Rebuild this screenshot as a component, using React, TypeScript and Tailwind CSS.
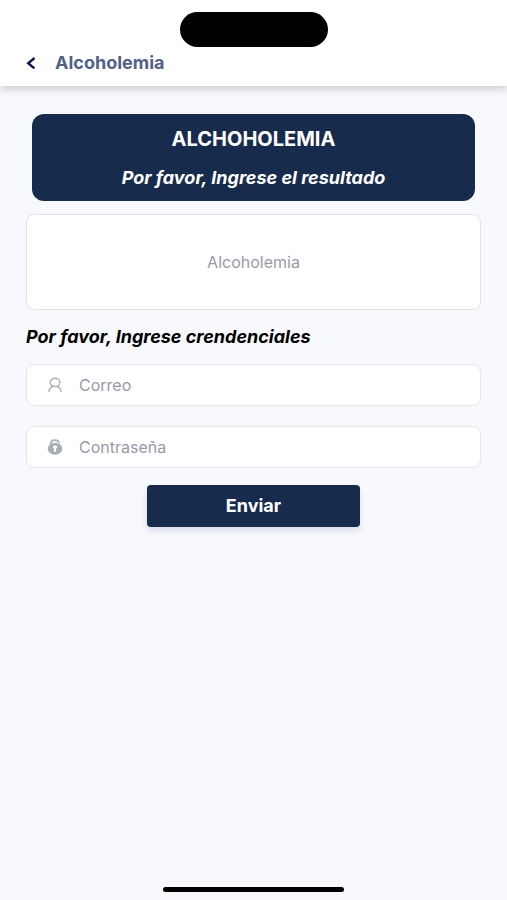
import type { ReactNode } from 'react';

interface CredentialFieldProps {
    id: string;
    label: string;
    type: 'email' | 'password';
    icon: ReactNode;
}

const UserIcon = () => (
    <svg viewBox="0 0 16 16" className="h-4 w-4" fill="none" stroke="currentColor" strokeWidth="1.4" strokeLinecap="round" aria-hidden="true">
        <ellipse cx="8" cy="5.4" rx="4.8" ry="4.1" />
        <path d="M2 14.3C2.3 11.7 3.9 10.1 6.2 9.4M14 14.3C13.7 11.7 12.1 10.1 9.8 9.4" />
    </svg>
);

const LockIcon = () => (
    <svg viewBox="0 0 16 16" className="h-4 w-4" fill="none" aria-hidden="true">
        <path d="M4 6V4.2C4 2.3 5.7 1.1 8 1.1C9.9 1.1 11.3 1.8 11.8 3.3" stroke="currentColor" strokeWidth="1.8" strokeLinecap="round" />
        <ellipse cx="8" cy="9.8" rx="7.3" ry="6" fill="currentColor" />
        <path d="M8 6.5C6.7 6.5 5.8 7.3 5.8 8.2C5.8 8.9 6.3 9.4 7 9.7V12.3C7 12.8 7.4 13.1 8 13.1C8.6 13.1 9 12.8 9 12.3V9.7C9.7 9.4 10.2 8.9 10.2 8.2C10.2 7.3 9.3 6.5 8 6.5Z" fill="white" />
    </svg>
);

const CredentialField = ({ id, label, type, icon }: CredentialFieldProps) => {
    return (
        <div className="flex h-[42px] items-center gap-4 rounded-lg border border-[#e4e7ec] bg-white px-5 text-[#a9adb5]">
            <label htmlFor={id}>{icon}</label>
            <input
                id={id}
                type={type}
                aria-label={label}
                placeholder={label}
                className="min-w-0 flex-1 bg-transparent text-base text-[#172b4d] outline-none placeholder:text-[#979ba9]"
            />
        </div>
    );
};

const App = () => {
    return (
        <div className="flex min-h-screen w-full flex-col bg-[#f8f9fd] font-['Inter','Liberation_Sans',sans-serif]">
            {/* Top bar */}
            <header className="bg-white px-6 pt-3 pb-[11px] shadow-[0_3px_8px_rgba(0,0,0,0.18)]">
                <div className="mx-auto h-[35px] w-[148px] rounded-full bg-black" />
                <div className="mt-1 flex items-center gap-[15px]">
                    <button type="button" aria-label="Volver" className="flex h-6 w-4 items-center justify-start text-[#0c1a4b]">
                        <svg viewBox="0 0 12 12" className="h-3 w-3" fill="none" stroke="currentColor" strokeWidth="2.4" aria-hidden="true">
                            <path d="M10.5 1L4.2 6.2L10.5 11.4" />
                        </svg>
                    </button>
                    <h1 className="text-lg leading-6 font-bold text-[#52618a]">Alcoholemia</h1>
                </div>
            </header>

            <main className="flex-1 px-[26px] pt-7">
                <section className="mx-[6px] rounded-xl bg-[#172b4d] pt-[13px] pb-[11px] text-center text-white">
                    <h2 className="text-xl leading-6 font-bold">ALCHOHOLEMIA</h2>
                    <label htmlFor="resultado" className="mt-[15px] block text-lg leading-6 font-bold italic">
                        Por favor, Ingrese el resultado
                    </label>
                </section>

                <form>
                    <input
                        id="resultado"
                        type="text"
                        placeholder="Alcoholemia"
                        className="mt-[13px] block h-24 w-full rounded-lg border border-[#dfe3ea] bg-white text-center text-base text-[#172b4d] outline-none placeholder:text-[#979ba9]"
                    />

                    <p className="mt-[15px] text-lg leading-6 font-bold text-black italic">
                        Por favor, Ingrese crendenciales
                    </p>

                    <div className="mt-[15px] space-y-5">
                        <CredentialField id="correo" label="Correo" type="email" icon={<UserIcon />} />
                        <CredentialField id="contrasena" label="Contraseña" type="password" icon={<LockIcon />} />
                    </div>

                    <button
                        type="button"
                        className="mx-auto mt-[17px] block h-[42px] w-[47%] rounded bg-[#172b4d] text-lg font-bold text-white shadow-[0_4px_6px_rgba(50,50,93,0.14)]"
                    >
                        Enviar
                    </button>
                </form>
            </main>

            {/* Home indicator */}
            <footer className="flex justify-center pb-2">
                <div className="h-[5px] w-[181px] rounded-full bg-black" />
            </footer>
        </div>
    );
};

export default App;
